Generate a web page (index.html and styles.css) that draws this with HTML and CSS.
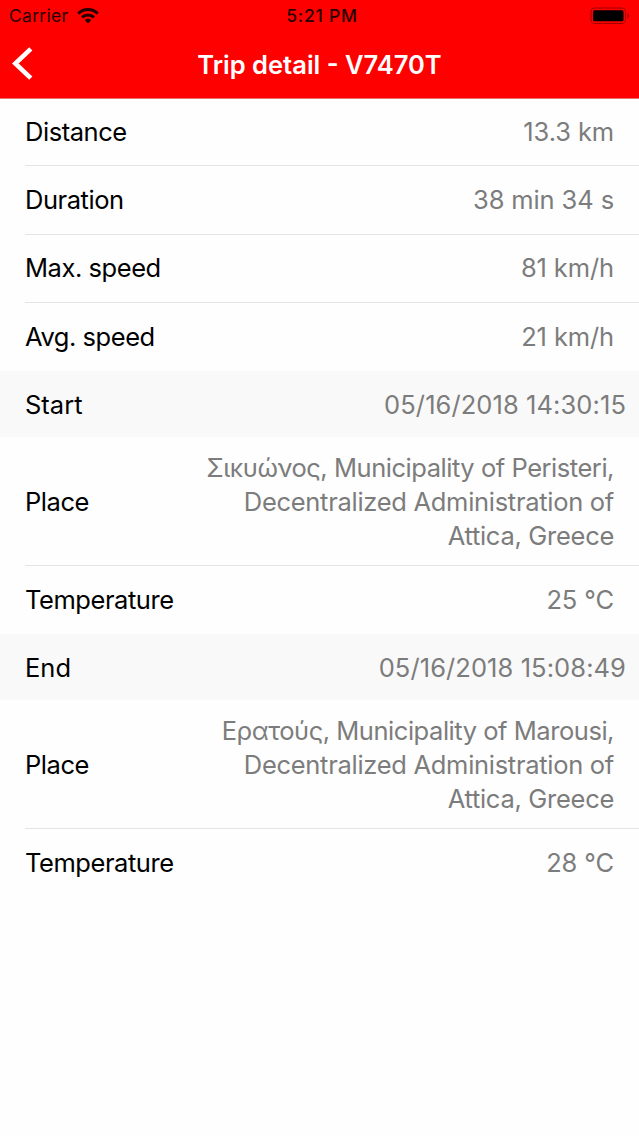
FILE: index.html
```
<!DOCTYPE html>
<html lang="en">
<head>
  <meta charset="UTF-8">
  <meta name="viewport" content="width=device-width, initial-scale=1.0">
  <title>Trip detail - V7470T</title>
  <link rel="stylesheet" href="styles.css">
</head>
<body>

  <header class="top">
    <!-- Status bar -->
    <div class="status-bar">
      <div class="carrier">
        <span>Carrier</span>
        <svg class="wifi" width="22" height="16" viewBox="0 0 22 16" aria-hidden="true">
          <g fill="none" stroke="#260000" stroke-width="3">
            <path d="M1.3 5.6a13.7 13.7 0 0 1 19.4 0"/>
            <path d="M5 9.4a8.5 8.5 0 0 1 12 0"/>
          </g>
          <path fill="#260000" d="M11 15.4l-3.3-3.3a4.7 4.7 0 0 1 6.6 0z"/>
        </svg>
      </div>
      <div class="time">5:21 PM</div>
      <svg class="battery" width="41" height="18" viewBox="0 0 41 18" aria-label="Battery full">
        <rect x="1" y="1" width="34.5" height="15.5" rx="3.5" fill="none" stroke="#a00000" stroke-width="1"/>
        <rect x="3" y="3.3" width="30.5" height="11" rx="1.5" fill="#000"/>
        <path d="M37.5 6.3c2.2.8 2.2 4.2 0 5z" fill="#900000"/>
      </svg>
    </div>

    <!-- Navigation bar -->
    <nav class="nav-bar">
      <a href="#" class="back" aria-label="Back">
        <svg width="22" height="34" viewBox="0 0 22 34">
          <path d="M18.8 1.8L3.3 16.5l15.5 14.7" fill="none" stroke="#fff" stroke-width="4.6"/>
        </svg>
      </a>
      <h1>Trip detail - V7470T</h1>
    </nav>
  </header>

  <main>
    <dl class="list">
      <div class="row"><dt>Distance</dt><dd>13.3 km</dd></div>
      <div class="row"><dt>Duration</dt><dd>38 min 34 s</dd></div>
      <div class="row"><dt>Max. speed</dt><dd>81 km/h</dd></div>
      <div class="row"><dt>Avg. speed</dt><dd>21 km/h</dd></div>
    </dl>

    <!-- Start of the trip -->
    <h2 class="section"><span>Start</span><time>05/16/2018 14:30:15</time></h2>
    <dl class="list">
      <div class="row place">
        <dt>Place</dt>
        <dd>
          <span class="street">Σικυώνος, Municipality of Peristeri,</span>
          Decentralized Administration of Attica, Greece
        </dd>
      </div>
      <div class="row"><dt>Temperature</dt><dd>25 °C</dd></div>
    </dl>

    <!-- End of the trip -->
    <h2 class="section"><span>End</span><time>05/16/2018 15:08:49</time></h2>
    <dl class="list">
      <div class="row place">
        <dt>Place</dt>
        <dd>
          <span class="street">Ερατούς, Municipality of Marousi,</span>
          Decentralized Administration of Attica, Greece
        </dd>
      </div>
      <div class="row"><dt>Temperature</dt><dd>28 °C</dd></div>
    </dl>
  </main>

</body>
</html>
```
FILE: styles.css
```
* {
  box-sizing: border-box;
}

body {
  margin: 0;
  background-color: #fefefe;
  color: #000;
  font-family: Inter, "Liberation Sans", sans-serif;
  font-size: 25.5px;
  line-height: 34px;
}

/* Header */
.top {
  height: 98px;
  background-color: #ff0000;
  box-shadow: 0 1px 0 #e87068;
}

.status-bar {
  display: grid;
  grid-template-columns: 1fr auto 1fr;
  align-items: center;
  height: 32px;
  padding: 0 8px 0 9px;
  color: #260000;
  font-size: 17.5px;
  line-height: 32px;
}

.carrier {
  display: flex;
  align-items: center;
  gap: 9px;
  letter-spacing: 0.3px;
}

.time {
  padding-left: 4px;
  font-weight: 500;
  letter-spacing: 0.8px;
}

.battery {
  justify-self: end;
}

.nav-bar {
  display: grid;
  grid-template-columns: 60px 1fr 60px;
  align-items: center;
  height: 64px;
}

.back {
  display: flex;
  padding-left: 12px;
}

.nav-bar h1 {
  margin: 0;
  padding-top: 1px;
  color: #fff;
  font-size: 25.5px;
  font-weight: 600;
  text-align: center;
}

/* Rows */
.list {
  margin: 0;
  padding-left: 25px;
}

.row {
  display: flex;
  align-items: center;
  justify-content: space-between;
  height: 68.3px;
  padding-right: 25px;
  border-bottom: 1px solid #e4e4e4;
}

.row:last-child {
  border-bottom: none;
}

.row.place {
  height: 129px;
  padding-top: 2px;
}

dt {
  letter-spacing: -0.45px;
}

dd {
  margin: 0;
  color: #7c7c7c;
  letter-spacing: -0.12px;
  text-align: right;
}

.place dd {
  width: 425px;
  letter-spacing: -0.29px;
}

.place .street {
  display: block;
  letter-spacing: -0.46px;
}

/* Section headings */
.section {
  display: flex;
  align-items: center;
  justify-content: space-between;
  height: 65.6px;
  margin: 0;
  padding: 2px 13px 0 25px;
  background-color: #f9f9f9;
  font-size: inherit;
  font-weight: normal;
}

.section time {
  color: #7c7c7c;
  letter-spacing: 0.08px;
}
```
